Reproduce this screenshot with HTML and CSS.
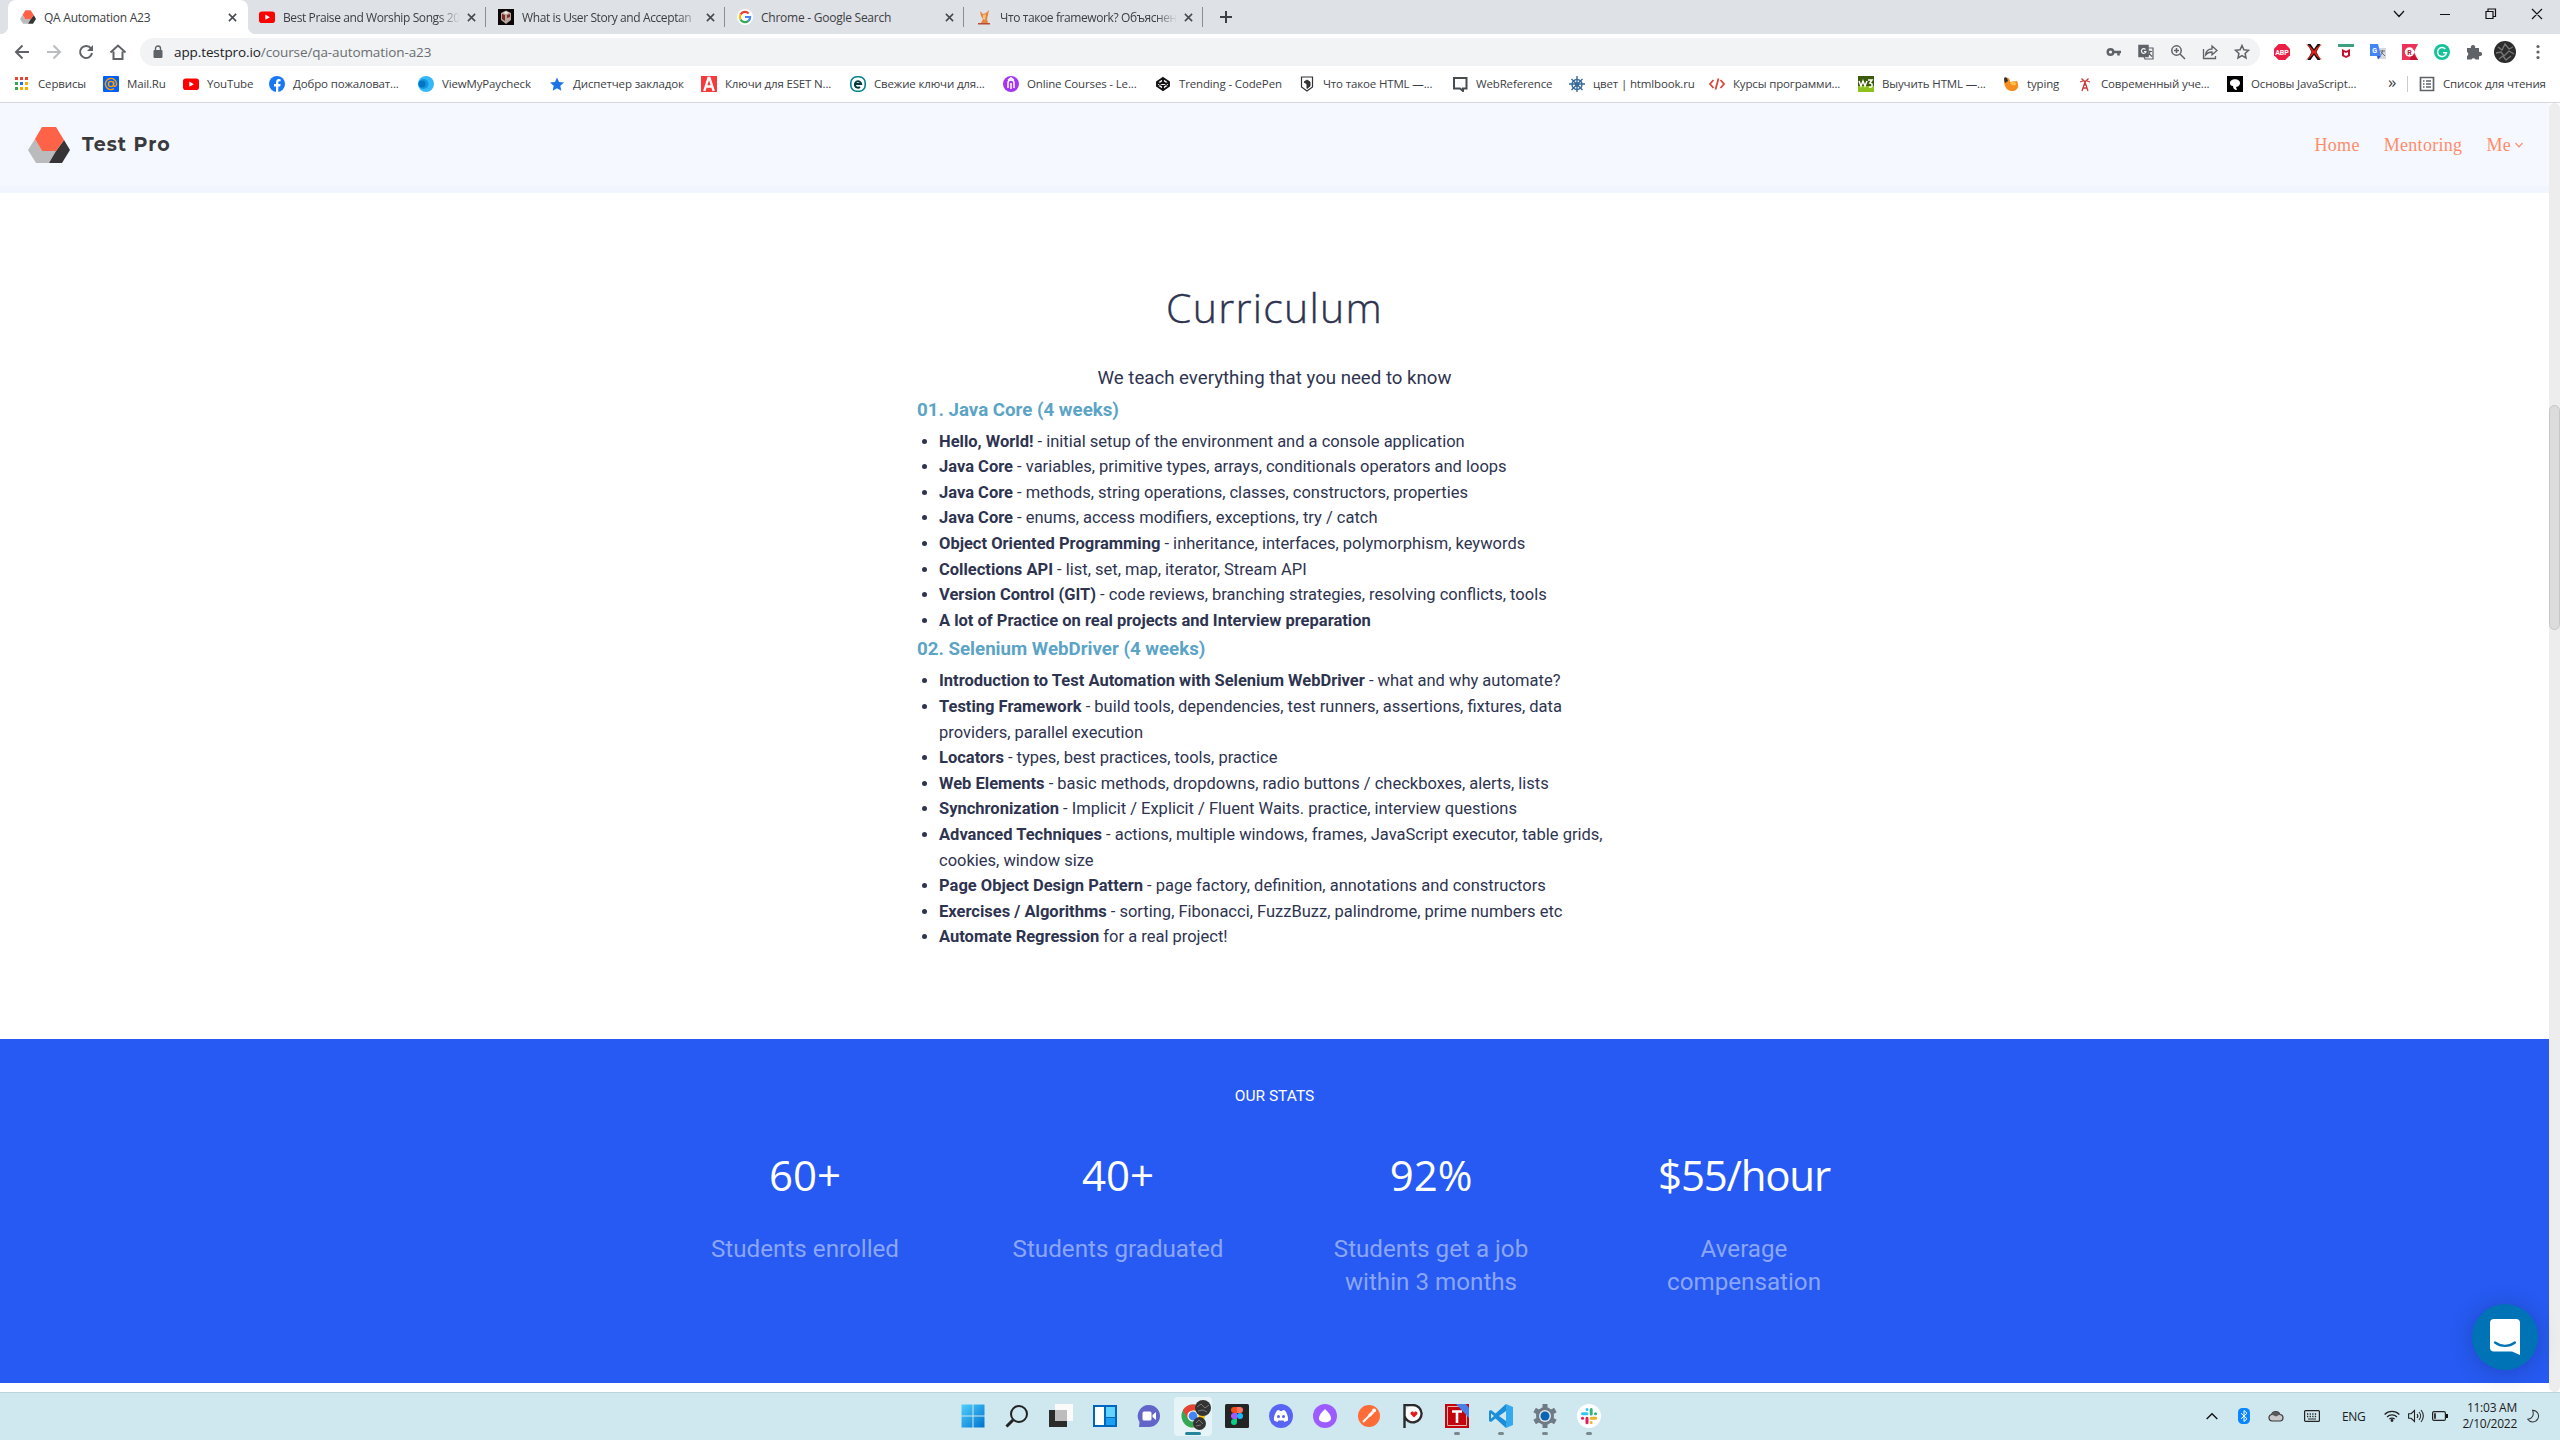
FILE: index.html
```
<!DOCTYPE html>
<html lang="en">
<head>
<meta charset="utf-8">
<title>QA Automation A23</title>
<link rel="stylesheet" href="styles.css">
</head>
<body>
<svg class="defs" width="0" height="0">
  <symbol id="hexlogo" viewBox="0 0 42 36"><path fill="#b9bbbc" d="M7 12 0 23l8 13h13l7-12H14z"/><path fill="#373435" d="M36 13 28 24 21 36h13l8-13z"/><path fill="#ff6347" d="M14 0h14l8 13-8 11H14L7 12z"/></symbol>
  <symbol id="yt" viewBox="0 0 16 16"><rect y="2.5" width="16" height="11.5" rx="2.8" fill="#f00"/><path d="M6.3 5.6v5.2l4.6-2.6z" fill="#fff"/></symbol>
  <symbol id="x" viewBox="0 0 10 10"><path d="M1 1l8 8M9 1 1 9" fill="none" stroke="#45494d" stroke-width="1.7"/></symbol>
</svg>

<header class="browser">
  <div class="tabs">
    <div class="tab active"><svg class="fav"><use href="#hexlogo"/></svg><span class="title">QA Automation A23</span><svg class="close"><use href="#x"/></svg></div>
    <div class="tab"><svg class="fav"><use href="#yt"/></svg><span class="title fade">Best Praise and Worship Songs 20</span><svg class="close"><use href="#x"/></svg></div>
    <div class="tab"><svg class="fav" viewBox="0 0 16 16"><path fill="#0b0708" d="M0 0h16v16H0z"/><path fill="#b9a79d" d="m8 1.500 5 2.500v7l-5 4-5-4V4z"/><path fill="#7c2c22" d="m4 5 3 1v6l-3-2zM9 6l3-1v3L9 9z"/><path fill="#eee" d="m5 4 3-1.500L11 4 8 5z"/></svg><span class="title fade">What is User Story and Acceptan</span><svg class="close"><use href="#x"/></svg></div>
    <div class="tab"><svg class="fav" viewBox="0 0 16 16"><circle cx="8" cy="8" r="8" fill="#fff"/><g fill="none" stroke-width="2.200"><path stroke="#ea4335" d="M3.500 5.500A5.100 5.100 0 0 1 11.600 4.400"/><path stroke="#fbbc05" d="M3.500 5.500a5.100 5.100 0 0 0 0 5"/><path stroke="#34a853" d="M3.500 10.500a5.100 5.100 0 0 0 7.900 1.400"/><path stroke="#4285f4" d="M11.400 11.900A5 5 0 0 0 13.100 8H8"/></g></svg><span class="title">Chrome - Google Search</span><svg class="close"><use href="#x"/></svg></div>
    <div class="tab"><svg class="fav" viewBox="0 0 16 16"><path fill="#e8853d" d="m4 2 3 3 3-1 3-3-1 5-1 4 1 4H5l2-4-2-3z"/><path fill="#f6c487" d="m7 6 3-1-1 6-2-1z"/><path fill="#b84b32" d="M2 14h12v1.500H2z"/></svg><span class="title fade">Что такое framework? Объяснен</span><svg class="close"><use href="#x"/></svg></div>
    <svg class="plus" viewBox="0 0 12 12"><path d="M6 0v12M0 6h12" stroke="#3c4043" stroke-width="2"/></svg>
    <svg class="winbtns" viewBox="0 0 152 12" fill="none" stroke="#111" stroke-width="1.200"><path d="m1 3 5 5.500L11 3M47 6.500h10M93 3.500h7v7h-7zM95 3V1h7.500v7.500H100M139 1l10 10m0-10-10 10"/></svg>
  </div>

  <div class="toolbar">
    <svg class="nav" viewBox="0 0 120 16" fill="none" stroke="#5f6368" stroke-width="2"><path d="M15 8H2m6.500-6.500L2 8l6.500 6.500"/><path stroke="#babcbe" d="M33 8h13m-6.500-6.500L46 8l-6.500 6.500"/><path d="M77 4.500A6 6 0 1 0 78 9"/><path fill="#5f6368" stroke="none" d="M79 1v6h-6z"/><path d="m96.500 8.500 7.500-7 7.500 7M99.500 7.500V15h9V7.500"/></svg>
    <div class="omnibox">
      <svg class="lock" viewBox="0 0 10 14"><path d="M2.500 6V3.500a2.500 2.500 0 0 1 5 0V6" fill="none" stroke="#5f6368" stroke-width="1.400"/><rect x="0.500" y="5" width="9" height="8" rx="1" fill="#5f6368"/></svg>
      <span class="url">app.testpro.io<i>/course/qa-automation-a23</i></span>
      <svg class="omni-icons" viewBox="0 0 144 16" fill="none" stroke="#5f6368" stroke-width="1.500"><circle cx="4.500" cy="8" r="2.800" stroke-width="2.400"/><path stroke-width="2.600" d="M7 8h8M12.500 8v3.500"/><rect x="33" y="1.500" width="9" height="11" fill="#5f6368"/><path stroke-width="1.200" d="M42 4h5v11h-8l-1-2M42 7.500h4m-2-1v1c0 2-1 3-2 4m1-2 3 3"/><path stroke="#f1f3f4" stroke-width="1.200" d="M39.500 5.500a2.300 2.300 0 1 0 .5 2h-2"/><circle cx="70.500" cy="6.500" r="4.700"/><path d="m74 10 5 5M68 6.500h5M70.500 4v5"/><path stroke-width="1.300" d="M97.500 5v9.500h12V12M99.500 11c.5-4 3-6 6.500-6V2l5 4.500-5 4.300V8c-3 0-5 1-6.500 3z"/><path d="m136 1.500 1.900 4.300 4.600.5-3.400 3.100.9 4.600-4-2.300-4 2.300.9-4.600-3.400-3.100 4.600-.5z"/></svg>
    </div>
    <div class="exts">
      <svg viewBox="0 0 16 16"><path fill="#ed1e45" d="M4.700 0h6.600L16 4.700v6.600L11.300 16H4.700L0 11.300V4.700z"/><text x="8" y="10.800" class="abp">ABP</text></svg>
      <svg viewBox="0 0 16 16"><path fill="#111" d="M1.500 0h13l-4 8 4 8h-13l4-8z"/><path fill="#fff" d="M4.500 0h7L8 5zM4.500 16h7L8 11z"/><path fill="#f01d16" d="M0 0c4 2 6.500 4.500 8 7 1.500-2.500 4-5 8-7-3 3-5 5.500-6 8 1 2.500 3 5 6 8-4-2-6.500-4.500-8-7-1.500 2.500-4 5-8 7 3-3 5-5.500 6-8-1-2.500-3-5-6-8z"/></svg>
      <svg viewBox="0 0 16 16"><path fill="#3e9e83" d="M0 0h16v3H0z"/><path fill="#c8102e" d="m4 5 4 2 4-2v7l-4 2-4-2z"/><path fill="#fff" d="m6 8 2 1 2-1v3l-2 1-2-1z"/></svg>
      <svg viewBox="0 0 16 16"><path fill="#d5d9df" d="M6 4h10v11H8z"/><path fill="#4285f4" d="M0 0h8l3 12H0z"/><path fill="#2a56c6" d="M7 12h4l-3 3.500z"/><text x="4.600" y="8.800" class="tiny">G</text><path fill="none" stroke="#6b7075" d="M10 7h5m-2.500-1v1c0 2-1 3-1.500 4m0-3 4 4"/></svg>
      <svg viewBox="0 0 16 16"><path fill="#ee3158" d="M0 0h16l-4 8 4 8H0z"/><path fill="#c31432" d="m10 8 6 8H8z"/><circle cx="7.500" cy="8" r="4.700" fill="#fff"/><text x="7.500" y="10.500" class="tiny red">R</text></svg>
      <svg viewBox="0 0 16 16"><circle cx="8" cy="8" r="8" fill="#15c39a"/><path fill="none" stroke="#fff" stroke-width="1.500" d="M11.300 5A4.500 4.500 0 1 0 12.500 8.700H9"/></svg>
      <svg viewBox="0 0 16 16"><path fill="#5f6368" d="M1 4h4a2.200 2.200 0 1 1 4 0h4v4a2.200 2.200 0 1 1 0 4v3.500H9.500a2.200 2.200 0 0 0-4 0H1V12a2.200 2.200 0 0 0 0-4z"/></svg>
      <svg class="ava" viewBox="0 0 22 22"><circle cx="11" cy="11" r="11" fill="#2c2c2c"/><path d="m4 6 4 3 3-6 4 5 4-2M2 12l5-1 3 4 5-5 5 3M5 18l4-3 3 4 5-4" stroke="#777" stroke-width="1.300" fill="none"/></svg>
      <svg class="dots" viewBox="0 0 4 16" fill="#5f6368"><circle cx="2" cy="2.500" r="1.600"/><circle cx="2" cy="8" r="1.600"/><circle cx="2" cy="13.500" r="1.600"/></svg>
    </div>
  </div>

  <div class="bookmarks">
    <div class="bm"><svg viewBox="0 0 16 16"><path fill="#ea4335" d="M1 1h3v3H1zm5 0h3v3H6zm5 0h3v3h-3z"/><path fill="#34a853" d="M1 6h3v3H1zm0 5h3v3H1z"/><path fill="#1a73e8" d="M6 6h3v3H6z"/><path fill="#f9ab00" d="M11 6h3v3h-3zm-5 5h3v3H6zm5 0h3v3h-3z"/></svg><span>Сервисы</span></div>
    <div class="bm"><svg viewBox="0 0 16 16"><rect width="16" height="16" rx="1" fill="#005ff9"/><g fill="none" stroke="#ff9e00" stroke-width="1.400"><circle cx="8" cy="8" r="2.600"/><path d="M10.600 5.500V9c0 2 3 2 3-1A5.600 5.600 0 1 0 11 12.700"/></g></svg><span>Mail.Ru</span></div>
    <div class="bm"><svg><use href="#yt"/></svg><span>YouTube</span></div>
    <div class="bm"><svg viewBox="0 0 16 16"><circle cx="8" cy="8" r="8" fill="#1877f2"/><path fill="#fff" d="M7 16v-5.500H5V8h2V6.300C7 4.200 8.200 3 10 3l1.600.2v2h-1C9.600 5.200 9.300 5.800 9.300 6.500V8h2.300l-.4 2.500H9.300V16z"/></svg><span>Добро пожаловат...</span></div>
    <div class="bm"><svg viewBox="0 0 16 16"><circle cx="8" cy="8" r="8" fill="#36b8f8"/><circle cx="5.500" cy="8" r="5" fill="#1597e0"/><circle cx="4" cy="8" r="3.500" fill="#0077c5"/></svg><span>ViewMyPaycheck</span></div>
    <div class="bm"><svg viewBox="0 0 16 16"><path fill="#1a73e8" d="m8 1.500 2 4.500 5 .5-3.700 3.300 1 5L8 12.300l-4.300 2.500 1-5L1 6.500 6 6z"/></svg><span>Диспетчер закладок</span></div>
    <div class="bm"><svg viewBox="0 0 16 16"><path fill="#f53b3b" d="M0 0h16v16H0z"/><path fill="none" stroke="#fff" stroke-width="2.400" d="M3.300 15 7.500 2h1l4.200 13M5 10.500h6"/></svg><span>Ключи для ESET N...</span></div>
    <div class="bm"><svg viewBox="0 0 16 16"><rect x=".8" y=".8" width="14.400" height="14.400" rx="6" fill="#fff" stroke="#00838a" stroke-width="1.600"/><path d="M5 8h6.200A3.200 3.200 0 1 0 10 11" fill="none" stroke="#003a40" stroke-width="1.900"/></svg><span>Свежие ключи для...</span></div>
    <div class="bm"><svg viewBox="0 0 16 16"><circle cx="8" cy="8" r="8" fill="#a435f0"/><path fill="none" stroke="#fff" stroke-width="1.500" d="M5 12V7a3 3 0 0 1 6 0v5M8 7v6M5 4l3-2 3 2"/></svg><span>Online Courses - Le...</span></div>
    <div class="bm"><svg viewBox="0 0 16 16" fill="none" stroke="#111" stroke-width="1.900"><path d="m8 2 6 4v4l-6 4-6-4V6zM2 6l6 4 6-4M2 10l6-4 6 4M8 2v4m0 4v4"/></svg><span>Trending - CodePen</span></div>
    <div class="bm"><svg viewBox="0 0 16 16" fill="none" stroke="#333"><path stroke-width="1.200" d="M2.500 1h11v10L8 15l-5.500-4z"/><path fill="#333" d="m5 6 3-2 3 2v4l-3 2.500V8z"/></svg><span>Что такое HTML —...</span></div>
    <div class="bm"><svg viewBox="0 0 16 16"><path fill="none" stroke="#454c52" stroke-width="2" d="M2 2h12.500v10.500H11V15l-3-2.500H2z"/></svg><span>WebReference</span></div>
    <div class="bm"><svg viewBox="0 0 16 16" fill="none" stroke="#38699a" stroke-width="1.400"><circle cx="8" cy="8.500" r="5"/><circle cx="8" cy="8.500" r="1.500"/><path d="M8 0v16M0 8h16M2.500 3l11 11M13.500 3l-11 11"/></svg><span>цвет | htmlbook.ru</span></div>
    <div class="bm"><svg viewBox="0 0 16 16" fill="none" stroke="#d9483b" stroke-width="1.800"><path d="M4.500 4 1 8l3.500 4M11.500 4 15 8l-3.500 4M9.500 2.500l-3 11"/></svg><span>Курсы программи...</span></div>
    <div class="bm"><svg viewBox="0 0 16 16"><path fill="#3c5a0c" d="M0 0h16v10H0z"/><path fill="#8dc11f" d="M0 10h16v6H0z"/><path fill="none" stroke="#fff" stroke-width="1.500" d="m1 5 2 5 2-5 2 5 2-5M10 4h4l-2 3c3 0 3 5-1 4"/></svg><span>Выучить HTML —...</span></div>
    <div class="bm"><svg viewBox="0 0 16 16"><path fill="#f78c1f" d="M1 4c3-4 6-2 6 2l7-1c3 6 0 10-5 10S1 11 1 4z"/><path fill="#333" d="M1 3c0-2 2-2 3-1l1 3-3 2z"/><path fill="#ffc34a" d="M7 7c3-3 6-1 6 1s-4 2-6-1z"/></svg><span>typing</span></div>
    <div class="bm"><svg viewBox="0 0 16 16" fill="none" stroke="#c63a3a" stroke-width="1.300"><path d="m5 15 3-9 3 9M6 12h4M7 9h2M4.500 2.500 8 6l3.500-3.500M3 6l3-1m7 1-3-1"/></svg><span>Современный уче...</span></div>
    <div class="bm"><svg viewBox="0 0 16 16"><path d="M0 0h16v16H0z"/><path fill="#fff" d="M3 7c0-5 10-5 10 0 0 3-3 4-4 4l1 3c-3 0-4-2-4-4-2 0-3-1-3-3z"/></svg><span>Основы JavaScript...</span></div>
    <div class="more">»</div>
    <div class="bm reading"><svg viewBox="0 0 16 16" fill="none" stroke="#5f6368" stroke-width="1.700"><path d="M1.500 1.500h13v13h-13zM7 5h5M7 8h5M7 11h5M4 5h1.500M4 8h1.500M4 11h1.500"/></svg><span>Список для чтения</span></div>
  </div>
</header>

<main class="viewport">
  <div class="page">
    <nav class="site">
      <svg class="mark"><use href="#hexlogo"/></svg>
      <span class="brand">Test Pro</span>
      <a>Home</a><a>Mentoring</a><a class="me">Me<svg viewBox="0 0 8 6"><path d="m.5 1 3.500 3.800L7.500 1" fill="none" stroke="#ff8c69" stroke-width="1.200"/></svg></a>
    </nav>
    <section class="curriculum">
      <h1>Curriculum</h1>
      <p class="lead">We teach everything that you need to know</p>
      <h2>01. Java Core (4 weeks)</h2>
      <ul>
        <li><b>Hello, World!</b> - initial setup of the environment and a console application</li>
        <li><b>Java Core</b> - variables, primitive types, arrays, conditionals operators and loops</li>
        <li><b>Java Core</b> - methods, string operations, classes, constructors, properties</li>
        <li><b>Java Core</b> - enums, access modifiers, exceptions, try / catch</li>
        <li><b>Object Oriented Programming</b> - inheritance, interfaces, polymorphism, keywords</li>
        <li><b>Collections API</b> - list, set, map, iterator, Stream API</li>
        <li><b>Version Control (GIT)</b> - code reviews, branching strategies, resolving conflicts, tools</li>
        <li><b>A lot of Practice on real projects and Interview preparation</b></li>
      </ul>
      <h2>02. Selenium WebDriver (4 weeks)</h2>
      <ul>
        <li><b>Introduction to Test Automation with Selenium WebDriver</b> - what and why automate?</li>
        <li><b>Testing Framework</b> - build tools, dependencies, test runners, assertions, fixtures, data providers, parallel execution</li>
        <li><b>Locators</b> - types, best practices, tools, practice</li>
        <li><b>Web Elements</b> - basic methods, dropdowns, radio buttons / checkboxes, alerts, lists</li>
        <li><b>Synchronization</b> - Implicit / Explicit / Fluent Waits. practice, interview questions</li>
        <li><b>Advanced Techniques</b> - actions, multiple windows, frames, JavaScript executor, table grids, cookies, window size</li>
        <li><b>Page Object Design Pattern</b> - page factory, definition, annotations and constructors</li>
        <li><b>Exercises / Algorithms</b> - sorting, Fibonacci, FuzzBuzz, palindrome, prime numbers etc</li>
        <li><b>Automate Regression</b> for a real project!</li>
      </ul>
    </section>
    <section class="stats">
      <h3>OUR STATS</h3>
      <div class="grid">
        <div><strong>60+</strong><p>Students enrolled</p></div>
        <div><strong>40+</strong><p>Students graduated</p></div>
        <div><strong>92%</strong><p>Students get a job<br>within 3 months</p></div>
        <div><strong class="long">$55/hour</strong><p>Average<br>compensation</p></div>
      </div>
    </section>
    <div class="chat"><svg viewBox="0 0 30 36"><path fill="#fff" d="M4 0h22a4 4 0 0 1 4 4v32l-8-3.500H4a4 4 0 0 1-4-4V4a4 4 0 0 1 4-4z"/><path d="M5 23.500c6 4.500 14 4.500 20 0" fill="none" stroke="#0073b7" stroke-width="2.200" stroke-linecap="round"/></svg></div>
  </div>
  <div class="scroll"><div class="thumb"></div></div>
</main>

<footer class="taskbar">
  <div class="apps">
    <div class="app"><svg viewBox="0 0 24 24"><defs><linearGradient id="w" x2="1" y2="1"><stop stop-color="#4fd0fb"/><stop offset="1" stop-color="#0072cf"/></linearGradient></defs><path fill="url(#w)" d="M.5.500h11v11H.5zm12 0h11v11h-11zm-12 12h11v11H.5zm12 0h11v11h-11z"/></svg></div>
    <div class="app"><svg viewBox="0 0 24 24" fill="none" stroke="#222" stroke-width="2"><circle cx="14" cy="10" r="8"/><path stroke-width="3" d="m8 16-6.500 6.500"/></svg></div>
    <div class="app"><svg viewBox="0 0 24 24"><path fill="#2b2b2b" d="M0 6h18v17H0z"/><path fill="#fafafa" d="M6 0h18v17H6z"/><path fill="#bdbdbd" d="M6 6h12v11H6z"/></svg></div>
    <div class="app"><svg viewBox="0 0 24 24"><path fill="#0067c0" d="M0 1h24v22H0z"/><path fill="#fff" d="M2 3h9v18H2z"/><path fill="#62d4ff" d="M13 3h9v10h-9z"/><path fill="#1ba1f2" d="M13 14h9v7h-9z"/></svg></div>
    <div class="app"><svg viewBox="0 0 24 24"><path fill="#6264c7" d="M12 1a11 11 0 1 1 0 22H2l.500-5A11 11 0 0 1 12 1z"/><rect x="5.500" y="7.500" width="9" height="9" rx="1.500" fill="#fff"/><path fill="#fff" d="m15.500 11 3.500-3v8l-3.500-3z"/></svg></div>
    <div class="app current"><svg viewBox="0 0 24 24"><circle cx="12" cy="12" r="11.500" fill="#34a853"/><path fill="#ea4335" d="M2 6.300A11.500 11.500 0 0 1 22 6.300H12L7 15z"/><path fill="#fbbc05" d="M22 6.300a11.500 11.500 0 0 1-10 17.200L17 15l-5-8.700z"/><circle cx="12" cy="12" r="5.600" fill="#fff"/><circle cx="12" cy="12" r="4.400" fill="#4285f4"/></svg><svg class="badge" viewBox="0 0 18 32"><circle cx="10" cy="9" r="8" fill="#333"/><circle cx="6.500" cy="24.500" r="6.500" fill="#333"/><path d="m4 8 4-3 4 4 4-3M3 24l3-3 4 4M5 12l5-1 4 2M3 27l5-1" stroke="#777" fill="none"/></svg></div>
    <div class="app"><svg viewBox="0 0 24 24"><rect width="24" height="24" rx="1.500" fill="#242424"/><path fill="#f24e1e" d="M9 3h3v6H9a3 3 0 0 1 0-6z"/><path fill="#ff7262" d="M12 3h3a3 3 0 0 1 0 6h-3z"/><path fill="#a259ff" d="M9 9h3v6H9a3 3 0 0 1 0-6z"/><circle cx="15" cy="12" r="3" fill="#1abcfe"/><path fill="#0acf83" d="M9 15h3v3a3 3 0 1 1-3-3z"/></svg></div>
    <div class="app"><svg viewBox="0 0 24 24"><circle cx="12" cy="12" r="12" fill="#5865f2"/><path fill="#fff" d="M8 6.500 10 6l1 1h2l1-1 2 .500c2 3 3.500 6 3 10L15.500 18l-1-1.500h-5L8.500 18 5 16.500c-.5-4 1-7 3-10z"/><circle cx="9.500" cy="12.500" r="1.500" fill="#5865f2"/><circle cx="14.500" cy="12.500" r="1.500" fill="#5865f2"/></svg></div>
    <div class="app"><svg viewBox="0 0 24 24"><circle cx="12" cy="12" r="12" fill="#9d5cff"/><path fill="#fff" d="M12 5c3 3 6 6 6 9.500 0 5-12 5-12 0C6 11 9 8 12 5z"/></svg></div>
    <div class="app"><svg viewBox="0 0 24 24"><circle cx="12" cy="12" r="11" fill="#ff6c37"/><path stroke="#fff" stroke-width="2" d="m6 18 7-7"/><path stroke="#fff" stroke-width="3" d="m12 12 4-4"/><circle cx="17" cy="6.500" r="2" fill="#fff"/></svg></div>
    <div class="app"><svg viewBox="0 0 24 24"><circle cx="13" cy="10" r="9" fill="#fff"/><path fill="none" stroke="#2b2b2b" stroke-width="2.400" d="M3.500 24V1h8.500a8.700 8.700 0 1 1-8.500 11"/><path fill="#e01b1b" d="M13 13.500 9.500 10c0-3 3-3 3.500-1 .5-2 3.500-2 3.500 1z"/></svg></div>
    <div class="app run"><svg viewBox="0 0 24 24"><path fill="#c4040b" d="M0 0h24v24H0z"/><path fill="none" stroke="#e8b5b5" d="M2.500 2.500h19v19h-19z"/><path stroke="#fff" stroke-width="2.600" d="M7 7.500h10M12 7.500V19"/><path fill="#4a7fe8" d="M11 0h10l3 4v10z"/></svg></div>
    <div class="app run"><svg viewBox="0 0 24 24"><path fill="#1c8ed8" d="M17 0 6.500 9.500 2 6 0 7v10l2 1 4.500-3.500L17 24z"/><path fill="#cfe8ef" d="M17 7v10l-7-5zM2 9.500 5 12l-3 2.500z"/><path fill="#35a9f0" d="m17 0 7 3v18l-7 3z"/></svg></div>
    <div class="app run"><svg viewBox="0 0 24 24"><circle cx="12" cy="12" r="9" fill="#6f7a84"/><path d="M12 0v24M1.600 6l20.800 12M22.400 6 1.600 18" stroke="#6f7a84" stroke-width="5"/><circle cx="12" cy="12" r="6" fill="#dfe5e9"/><circle cx="12" cy="12" r="4.500" fill="#0b65b5"/></svg></div>
    <div class="app run"><svg viewBox="0 0 24 24"><circle cx="12" cy="12" r="12" fill="#fff"/><g stroke-width="3" stroke-linecap="round"><path stroke="#36c5f0" d="M5.500 9.800H10M10 5.500v.1"/><path stroke="#2eb67d" d="M14.200 5.500V10M18.500 9.800h.1"/><path stroke="#ecb22e" d="M14.200 14.200h4.500M14.200 18.500v.1"/><path stroke="#e01e5a" d="M10 14.200v4.500M5.500 14.200h.1"/></g></svg></div>
  </div>
  <div class="tray">
    <svg class="t-up" viewBox="0 0 12 8"><path d="m.700 7 5.300-5.300L11.300 7" fill="none" stroke="#111" stroke-width="1.400"/></svg>
    <svg class="t-bt" viewBox="0 0 12 16"><rect width="12" height="16" rx="4.500" fill="#0a84ff"/><path d="m3 5.200 6 5.600-3 2.700v-11l3 2.700-6 5.600" fill="none" stroke="#fff"/></svg>
    <svg class="t-cloud" viewBox="0 0 16 12"><path d="M4 11a3.300 3.300 0 0 1-.5-6.500 4.600 4.600 0 0 1 8.500 0A3.300 3.300 0 0 1 12.500 11z" fill="#c9c9c9" stroke="#3a3a3a" stroke-width="1.100"/><path d="M3.500 4.500a4.600 4.600 0 0 1 8.500 0l-4 2z" fill="#5a5a5a"/></svg>
    <svg class="t-kb" viewBox="0 0 16 12"><rect x=".6" y=".6" width="14.800" height="10.800" rx="1" fill="none" stroke="#222" stroke-width="1.200"/><path d="M3 4h10M3 6.500h10" stroke="#222" stroke-width="1.300" stroke-dasharray="1.300 1.300"/><path d="M4 9h8" stroke="#222"/></svg>
    <span class="lang">ENG</span>
    <svg class="t-wifi" viewBox="0 0 16 12" fill="none" stroke="#222" stroke-width="1.200"><path d="M.6 4.500a10.500 10.500 0 0 1 14.800 0M3 7a7 7 0 0 1 10 0M5.300 9.200a3.800 3.800 0 0 1 5.400 0"/><circle cx="8" cy="10.500" r=".8" fill="#222"/></svg>
    <svg class="t-vol" viewBox="0 0 16 14" fill="none" stroke="#222" stroke-width="1.100"><path d="M.6 4.700h2.500L6.500 1.500v11L3.100 9.300H.6zM9 5a3 3 0 0 1 0 4M11 3a6 6 0 0 1 0 8M13 1a9 9 0 0 1 0 12"/></svg>
    <svg class="t-bat" viewBox="0 0 16 10"><rect x=".6" y=".6" width="12.800" height="8.800" rx="1.500" fill="none" stroke="#222" stroke-width="1.200"/><path d="M2.200 2.300h1.600v5.400H2.200zM14 3h2v4h-2z" fill="#111"/></svg>
    <div class="clock">11:03 AM<br>2/10/2022</div>
    <svg class="t-moon" viewBox="0 0 14 14"><path d="M6 .8a6.300 6.300 0 1 1-5.200 9.700C5.500 10 8 6 6 .8z" fill="none" stroke="#333" stroke-width="1.100"/></svg>
  </div>
</footer>
</body>
</html>
```
FILE: styles.css
```
* { box-sizing: border-box; }
body { margin: 0; width: 2560px; height: 1440px; overflow: hidden; display: flex; flex-direction: column; background: #fff; font-family: Roboto, "Liberation Sans", sans-serif; }
svg { display: block; flex: none; }
.defs { position: absolute; }

/* browser chrome */
.browser { height: 103px; flex: none; border-bottom: 1px solid #d5d7da; font-family: "Open Sans", "Noto Sans", sans-serif; font-size: 12px; color: #3c4043; }
.tabs { height: 34px; background: #dee1e6; display: flex; align-items: center; padding-left: 8px; }
.tab { width: 239px; height: 34px; flex: none; display: flex; align-items: center; padding: 0 10px 0 12px; position: relative; }
.tab + .tab::after { content: ""; position: absolute; right: 0; top: 7px; width: 1px; height: 20px; background: #8a8d92; }
.tab.active { width: 240px; margin-right: -1px; background: #fff; border-radius: 8px 8px 0 0; }
.tab.active::before, .tab.active::after { content: ""; position: absolute; bottom: 0; width: 8px; height: 8px; }
.tab.active::before { left: -8px; background: radial-gradient(circle at 0 0, transparent 8px, #fff 8.5px); }
.tab.active::after { right: -8px; background: radial-gradient(circle at 100% 0, transparent 8px, #fff 8.5px); }
.fav { width: 16px; height: 16px; }
.title { width: 177px; margin: 0 7px 0 8px; white-space: nowrap; overflow: hidden; letter-spacing: -.25px; }
.fade { letter-spacing: -.4px; -webkit-mask-image: linear-gradient(90deg, #000 88%, transparent); mask-image: linear-gradient(90deg, #000 88%, transparent); }
.close { width: 9px; height: 9px; }
.plus { width: 12px; height: 12px; margin-left: 17px; }
.winbtns { width: 152px; height: 12px; margin: -6px 15px 0 auto; }

.toolbar { height: 36px; display: flex; align-items: center; padding-left: 14px; }
.nav { width: 120px; height: 16px; margin-right: 6px; }
.omnibox { width: 2120px; height: 28px; border-radius: 14px; background: #f1f3f4; display: flex; align-items: center; padding: 0 10px 0 13px; }
.lock { width: 10px; height: 14px; margin-right: 11px; }
.url { font-size: 13.5px; letter-spacing: -.1px; line-height: 18px; margin-top: -1px; color: #202124; }
.url i { font-style: normal; color: #6a6e73; }
.omni-icons { width: 144px; height: 16px; margin-left: auto; }
.exts { display: flex; align-items: center; gap: 16px; padding-left: 14px; }
.exts svg { width: 16px; height: 16px; }
.exts .ava { width: 22px; height: 22px; margin: 0 -4px; }
.exts .dots { width: 4px; margin-left: 8px; }
.abp { font: 700 7px Roboto, sans-serif; fill: #fff; text-anchor: middle; }
.tiny { font: 700 7px Roboto, sans-serif; fill: #fff; text-anchor: middle; }
.red { fill: #b01030; }

.bookmarks { height: 28px; padding-left: 14px; display: grid; align-items: center; grid-template-columns: 89px 80px 86px 149px 131px 152px 149px 153px 152px 144px 153px 117px 140px 149px 145px 74px 150px 161px 19px 1fr; font-size: 11.5px; }
.bm { display: flex; align-items: center; gap: 8px; white-space: nowrap; letter-spacing: -.15px; }
.bm svg { width: 16px; height: 16px; }
.bm span { line-height: 16px; margin-top: -1px; }
.more { font-size: 17px; line-height: 20px; margin-top: -4px; }
.reading { border-left: 1px solid #c9ccd0; padding-left: 11px; height: 16px; }

/* course page */
.viewport { height: 1289px; flex: none; display: flex; }
.page { width: 2549px; position: relative; }
.site { height: 83px; background: #f5f8ff; box-shadow: 0 7px 0 #f1f5fe; display: flex; align-items: center; padding: 0 26px 0 28px; color: #ff8c69; font: 18px "Liberation Serif", serif; letter-spacing: .3px; }
.mark { width: 42px; height: 36px; }
.brand { margin-left: 12px; margin-right: auto; font: 700 19px Montserrat, "DejaVu Sans", sans-serif; letter-spacing: 1px; color: #3a3a3c; }
.site a { margin-left: 24px; padding-top: 1px; }
.me { display: flex; align-items: center; gap: 4px; }
.me svg { width: 8px; height: 6px; }

.curriculum { width: 715px; height: 853px; margin: 0 auto; padding-top: 91.6px; color: #2e3450; font-size: 16.5px; }
h1 { margin: 0; height: 84px; text-align: center; font: 300 41px/58px "Open Sans", "Noto Sans", sans-serif; letter-spacing: 1.3px; -webkit-text-stroke: .4px #2e3450; }
.lead { margin: 0; height: 32px; line-height: 32px; font-size: 18.65px; text-align: center; }
h2 { margin: 0; height: 35px; line-height: 32px; font-size: 18.7px; font-weight: 700; color: #5ba4c6; }
ul { margin: 0; padding-left: 22px; line-height: 25.6px; }

.stats { height: 344px; background: #265af2; color: #fff; text-align: center; padding-top: 47px; }
h3 { margin: 0; font-size: 15.5px; line-height: 21px; font-weight: 400; }
.grid { display: grid; grid-template-columns: repeat(4, 313px); justify-content: center; padding-top: 38px; }
.grid strong { display: block; font: 400 42px/60px "Open Sans", "Noto Sans", sans-serif; }
.grid .long { letter-spacing: -1.2px; }
.grid p { margin: 28px 0 0; font-size: 24.2px; line-height: 33px; color: #8ba6f8; }
.chat { position: absolute; left: 2472px; top: 1201px; width: 66px; height: 66px; border-radius: 50%; background: #0073b7; box-shadow: 0 2px 24px rgba(0,0,0,.2); display: grid; place-items: center; }
.chat svg { width: 30px; height: 36px; }
.scroll { width: 11px; background: #ededed; padding-top: 302px; border-radius: 6px; }
.thumb { height: 225px; background: #dcdcdc; border: 1px solid #c6c6c6; border-radius: 6px; }

/* taskbar */
.taskbar { height: 48px; flex: none; background: #cfe8ef; border-top: 1px solid #bcd5dc; display: flex; align-items: center; padding-left: 951px; font-family: "Open Sans", "Noto Sans", sans-serif; color: #1c1c1c; }
.apps { display: flex; margin-top: -1px; }
.app { width: 44px; height: 46px; display: grid; place-items: center; position: relative; }
.app > svg:first-child { width: 24px; height: 24px; }
.run::after { content: ""; position: absolute; bottom: 4px; left: 19px; width: 6px; height: 3px; border-radius: 2px; background: #7b888d; }
.current::before { content: ""; position: absolute; inset: 4px 3px 3px 3px; border-radius: 4px; background: #e7f4f7; }
.current svg { position: relative; }
.current::after { content: ""; position: absolute; bottom: 4px; left: 14px; width: 16px; height: 3px; border-radius: 2px; background: #24869a; }
.current .badge { position: absolute; left: 22px; top: 6px; width: 18px; height: 32px; }
.tray { margin-left: auto; margin-top: -1px; display: flex; align-items: center; padding-right: 20px; font-size: 12px; }
.t-up { width: 12px; height: 8px; margin-right: 20px; }
.t-bt { width: 12px; height: 16px; margin-right: 18px; }
.t-cloud { width: 16px; height: 12px; margin-right: 20px; }
.t-kb { width: 16px; height: 12px; margin-right: 22px; }
.lang { width: 25px; margin-right: 17px; letter-spacing: -.3px; }
.t-wifi { width: 16px; height: 12px; margin-right: 8px; }
.t-vol { width: 16px; height: 14px; margin-right: 8px; }
.t-bat { width: 16px; height: 10px; }
.clock { width: 69px; text-align: right; line-height: 16px; margin-right: 10px; letter-spacing: -.25px; }
.t-moon { width: 13px; height: 14px; }
```
